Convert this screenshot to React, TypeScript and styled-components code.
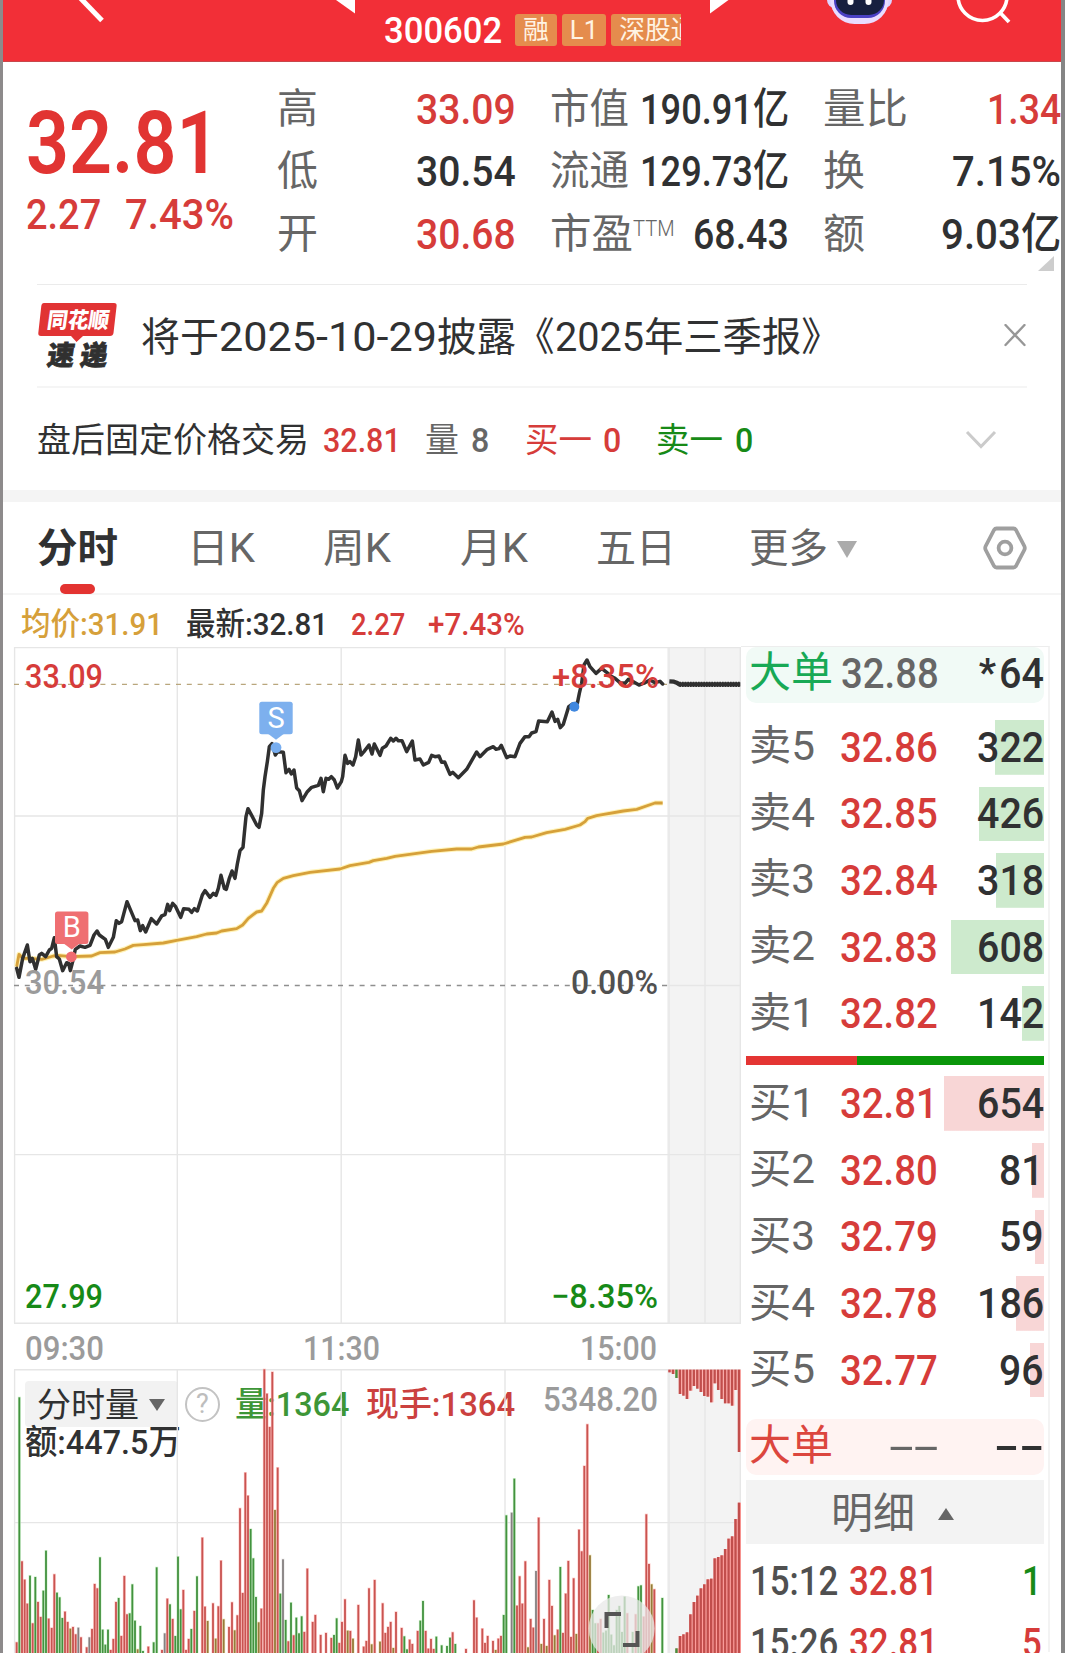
import React, { useLayoutEffect, useRef, useState } from "react";
import styled, { createGlobalStyle } from "styled-components";

const C = {
  red: "#d63c3a",
  green: "#178a17",
  ink: "#303132",
  mid: "#666666",
  soft: "#9b9b9b",
  line: "#e6e6e6",
  gold: "#d6a03a",
};
const FONT = `Roboto, "Noto Sans CJK SC", "Noto Sans", sans-serif`;

const Global = createGlobalStyle`
  * { box-sizing: border-box; }
  body { margin: 0; background: #fff; font-family: ${FONT}; color: ${C.ink}; }
`;

/* ---------- condensed text ---------- */

const FitBox = styled.span<{ $w: number; $size: number; $color?: string; $weight?: number }>`
  display: block;
  flex: none;
  width: ${(p) => p.$w}px;
  font-size: ${(p) => p.$size}px;
  line-height: ${(p) => Math.round(p.$size * 1.2)}px;
  font-weight: ${(p) => p.$weight ?? 400};
  color: ${(p) => p.$color ?? "inherit"};
`;
const FitInner = styled.span`
  display: inline-block;
  vertical-align: top;
  white-space: nowrap;
  transform-origin: 0 50%;
`;

type FitProps = { w: number; size: number; color?: string; weight?: number; children: React.ReactNode };
function Fit({ w, size, color, weight, children }: FitProps) {
  const ref = useRef<HTMLSpanElement>(null);
  const [k, setK] = useState(1);
  useLayoutEffect(() => {
    if (ref.current) setK(w / ref.current.offsetWidth);
  }, [w, size, weight, children]);
  return (
    <FitBox $w={w} $size={size} $color={color} $weight={weight}>
      <FitInner ref={ref} style={{ transform: `scaleX(${k})` }}>{children}</FitInner>
    </FitBox>
  );
}

/* ---------- frame and header ---------- */

const Page = styled.div`
  width: 1065px;
  height: 1653px;
  overflow: hidden;
  background: #fff;
  border-left: 3px solid #8d8a8b;
  border-right: 4px solid #858585;
`;
const Header = styled.header`
  height: 62px;
  background: #f22f37;
  border-bottom: 1px solid #c8474b;
  display: grid;
  grid-template-columns: 333px 48px 297px 146px 90px 1fr;
  overflow: hidden;
`;
const Identity = styled.div`
  display: flex;
  align-items: center;
  height: 52px;
  margin-top: 4px;
  overflow: hidden;
`;
const Code = styled.div`
  padding-top: 1px;
`;
const Tags = styled.div`
  display: flex;
  gap: 5px;
  margin: -1px 0 0 13px;
`;
const Tag = styled.span`
  flex: none;
  height: 32px;
  line-height: 32px;
  padding: 0 8px;
  border-radius: 3px;
  background: #e58c4d;
  color: #fff3e2;
  font-size: 25.8px;
`;

/* ---------- summary ---------- */

const Summary = styled.section`
  position: relative;
  display: grid;
  grid-template-columns: 274px 1fr;
  height: 222px;
`;
const PriceBlock = styled.div`
  padding: 29px 0 0 23px;
`;
const Changes = styled.div`
  display: flex;
  gap: 24px;
  margin-top: -7px;
`;
const Metrics = styled.div`
  display: grid;
  grid-template-columns: 239px 239px 238px;
  grid-auto-rows: 62.3px;
  column-gap: 34px;
  padding-top: 16px;
`;
const Metric = styled.div`
  display: flex;
  align-items: center;
  justify-content: space-between;
`;
const MetricName = styled.div`
  display: flex;
  align-items: flex-start;
  padding-top: 1px;
`;
const Sup = styled.div`
  padding-top: 5px;
`;
const Corner = styled.i`
  position: absolute;
  right: 7px;
  bottom: 13px;
  border-left: 16px solid transparent;
  border-bottom: 15px solid #cdcdcd;
`;

/* ---------- notices ---------- */

const Notice = styled.section`
  margin: 0 34px;
  height: 104px;
  border-top: 1px solid #ebebeb;
  border-bottom: 2px solid #f5f5f5;
  display: flex;
  align-items: center;
`;
const Brand = styled.div`
  width: 80px;
  margin-right: 24px;
  height: 67px;
`;
const Headline = styled.div`
  display: flex;
  align-items: center;
  padding-top: 4px;
`;
const Push = styled.div`
  flex: 1;
`;
const AfterHours = styled.section`
  height: 102px;
  padding: 2px 64px 0 34px;
  display: flex;
  align-items: center;
`;
const Pair = styled.div<{ $ml: number; $gap: number }>`
  display: flex;
  margin-left: ${(p) => p.$ml}px;
  gap: ${(p) => p.$gap}px;
`;
const Band = styled.div`
  height: 12px;
  background: #f4f4f4;
`;

/* ---------- tabs ---------- */

const Tabs = styled.nav`
  height: 93px;
  padding: 0 34px 0 34px;
  border-bottom: 2px solid #f5f5f5;
  display: grid;
  grid-template-columns: 150px 136px 137px 136px 153px 1fr auto;
  align-items: center;
`;
const Tab = styled.div<{ $on?: boolean }>`
  position: relative;
  display: flex;
  align-items: center;
  gap: 9px;
  height: 91px;
  padding-top: 3px;
  color: ${(p) => (p.$on ? C.ink : C.mid)};
  &::after {
    content: "";
    display: ${(p) => (p.$on ? "block" : "none")};
    position: absolute;
    left: 23px;
    bottom: -1px;
    width: 35px;
    height: 10px;
    border-radius: 5px;
    background: #e33331;
  }
`;
const Caret = styled.i<{ $w: number; $h: number; $color: string; $up?: boolean }>`
  border-left: ${(p) => p.$w / 2}px solid transparent;
  border-right: ${(p) => p.$w / 2}px solid transparent;
  ${(p) => (p.$up ? "border-bottom" : "border-top")}: ${(p) => p.$h}px solid ${(p) => p.$color};
`;
const QuoteLine = styled.div`
  height: 52px;
  padding: 5px 0 0 18px;
  display: flex;
  align-items: center;
`;

/* ---------- body ---------- */

const Body = styled.main`
  display: flex;
  height: 1006px;
`;
const Charts = styled.section`
  position: relative;
  width: 738px;
`;
const ChartSvg = styled.svg`
  position: relative;
  display: block;
`;
const VolumeBar = styled.div`
  position: absolute;
  left: 22px;
  top: 734px;
  width: 500px;
`;
const VolumeTop = styled.div`
  display: flex;
  align-items: center;
  height: 46px;
`;
const Picker = styled.div`
  display: flex;
  align-items: center;
  gap: 10px;
  width: 153px;
  height: 46px;
  padding: 2px 0 0 12px;
  border-radius: 4px;
  background: #f2f2f2;
  margin-right: 7px;
`;
const Help = styled.span`
  width: 35px;
  height: 35px;
  border: 2.5px solid #c3c3c3;
  border-radius: 50%;
  color: #bdbdbd;
  font-size: 27px;
  line-height: 31px;
  text-align: center;
  margin-right: 15px;
`;
const Amount = styled.div`
  margin-top: -5px;
`;

const Book = styled.section`
  width: 309px;
  height: 1006px;
  padding: 0 4px 0 5px;
  border-top: 1px solid #ededed;
  border-right: 2px solid #f3f3f3;
  margin-top: -1px;
`;
const BigOrder = styled.div<{ $bg: string }>`
  display: grid;
  grid-template-columns: 92px 98px 1fr;
  align-items: center;
  height: 55.5px;
  padding: 0 0 3px 3px;
  border-radius: 10px;
  background: ${(p) => p.$bg};
`;
const Star = styled.span`
  font-size: 38px;
  font-weight: 700;
  line-height: 52px;
  height: 38px;
  margin-right: 3px;
`;
const End = styled.div<{ $pr?: number }>`
  display: flex;
  justify-content: flex-end;
  padding-right: ${(p) => p.$pr ?? 0}px;
`;
const Levels = styled.div<{ $mt: number }>`
  display: grid;
  grid-auto-rows: 54.6px;
  row-gap: 12px;
  margin-top: ${(p) => p.$mt}px;
`;
const Level = styled.div<{ $bar: number; $tint: string }>`
  display: grid;
  grid-template-columns: 91px 100px 1fr;
  align-items: center;
  padding: 0 0 1px 3px;
  background: linear-gradient(${(p) => p.$tint}, ${(p) => p.$tint}) right / ${(p) => p.$bar}px 100% no-repeat;
`;
const Ratio = styled.div`
  height: 9.5px;
  margin-top: 15px;
  background: linear-gradient(90deg, #e43533 37.3%, #0a960a 37.3%);
`;
const Details = styled.div`
  display: flex;
  align-items: center;
  gap: 23px;
  height: 64px;
  margin: 6px 0 5px;
  padding: 4px 0 0 85px;
  background: #f3f3f3;
`;
const Tick = styled.div`
  display: grid;
  grid-template-columns: 99px 90px 1fr;
  align-items: center;
  height: 62px;
  padding: 3px 0 0 4px;
`;

/* ---------- data ---------- */

const metrics: { name: string; nw: number; value: string; w: number; color?: string; sup?: string }[] = [
  { name: "高", nw: 41, value: "33.09", w: 100, color: C.red },
  { name: "市值", nw: 79, value: "190.91亿", w: 149 },
  { name: "量比", nw: 85, value: "1.34", w: 74, color: C.red },
  { name: "低", nw: 41, value: "30.54", w: 100 },
  { name: "流通", nw: 79, value: "129.73亿", w: 149 },
  { name: "换", nw: 42, value: "7.15%", w: 109 },
  { name: "开", nw: 41, value: "30.68", w: 100, color: C.red },
  { name: "市盈", nw: 83, value: "68.43", w: 96, sup: "TTM" },
  { name: "额", nw: 42, value: "9.03亿", w: 120 },
];

const asks: [string, string, string, number][] = [
  ["卖5", "32.86", "322", 49],
  ["卖4", "32.85", "426", 65],
  ["卖3", "32.84", "318", 48],
  ["卖2", "32.83", "608", 93],
  ["卖1", "32.82", "142", 22],
];
const bids: [string, string, string, number][] = [
  ["买1", "32.81", "654", 100],
  ["买2", "32.80", "81", 12],
  ["买3", "32.79", "59", 9],
  ["买4", "32.78", "186", 28],
  ["买5", "32.77", "96", 14],
];

const PRICE =
  "50,985 57,1012 68,955 82,915 90,965 97,955 107,988 118,945 125,940 137,950 148,930 155,925 163,893 170,950 178,957 188,992 200,968 206,970 211,992 218,965 226,928 240,918 255,922 270,916 282,885 291,873 298,885 316,898 325,922 340,892 349,842 357,850 365,845 381,785 405,842 413,840 421,872 428,857 437,876 454,836 470,852 485,828 495,824 503,793 509,812 518,790 527,800 542,832 551,806 567,808 575,817 583,806 592,813 607,765 615,752 630,772 640,760 648,766 655,745 663,706 673,745 679,748 688,715 696,693 705,715 712,672 720,632 729,622 733,580 738,530 744,506 757,530 770,555 777,562 785,520 790,450 795,410 802,365 808,320 816,311 826,345 833,335 850,337 858,398 867,388 874,402 882,390 890,444 898,452 906,482 922,455 935,442 955,436 963,415 970,455 978,415 986,418 994,410 1003,420 1012,444 1024,425 1028,410 1035,346 1043,370 1050,365 1059,375 1067,350 1075,300 1083,345 1092,335 1107,315 1116,342 1123,312 1140,346 1147,325 1158,318 1172,295 1180,303 1188,295 1195,302 1206,302 1220,335 1237,303 1245,360 1260,357 1270,375 1286,367 1295,346 1305,350 1317,348 1325,367 1334,366 1350,403 1358,397 1375,413 1400,388 1430,336 1440,350 1462,328 1480,320 1488,328 1497,326 1504,316 1520,353 1530,348 1545,350 1560,310 1575,290 1587,290 1595,279 1608,275 1616,243 1642,245 1656,216 1665,244 1673,238 1681,263 1690,253 1706,200 1718,192 1732,190 1738,160 1745,130 1752,75 1761,60 1770,80 1788,100 1805,85 1820,97 1832,108 1845,115 1860,128 1875,130 1885,118 1900,125 1917,135 1935,128 1950,120 1965,128 1980,124 1988,132";
const AVERAGE =
  "50,980 57,943 68,955 90,955 125,958 160,948 180,947 213,950 275,948 300,938 345,936 375,927 400,916 430,914 490,909 530,901 590,890 620,882 650,879 665,873 710,866 728,855 745,835 770,816 785,813 800,790 820,745 832,727 850,715 880,707 930,697 1020,687 1050,677 1107,667 1120,662 1160,655 1185,649 1245,641 1295,634 1370,627 1415,627 1435,621 1510,612 1575,592 1595,591 1640,578 1695,568 1740,555 1755,545 1763,535 1790,527 1870,513 1910,508 1965,489 1988,489";

/* x, kind, top; r = up, g = down, o = mixed, k = flat */
const VOLUME =
  "50r1087 58g352 66r844 74r899 82r971 90g887 98r1030 106g891 114r966 122r1011 130g932 138g812 146r1016 155r1044 163r883 171g938 179g952 187g1014 195r995 203r1026 211o1046 219r1041 227r1063 235k1043 243r1072 260r1102 268k1072 276r1047 284r912 292r925 300g832 308g1049 316g1094 324g1049 332r1110 340r1077 348r966 356g954 364r1068 373r888 381r1003 389g1000 397g913 405g1022 413o1108 421g1038 429g1113 445r1100 461g1087 470g862 486r1110 494k1060 502r956 510g973 518r1017 526g1068 534g830 542g988 550r930 558r1110 566r1077 574g1047 583r993 591g889 607r773 615r980 623o1023 639r970 647o1076 655r979 663r842 671o1018 687r1041 696r967 704o1051 712r1006 720r685 728r939 736r578 744r647 752g747 760g835 768g951 776o1027 784r986 793r268 801r341 809r441 817r276 825o690 833r563 841g941 849k838 857g1020 865r1084 873g968 881r1066 889g1013 897g1060 905g1009 913r1056 922r866 938r1026 946r1005 962r1065 978r1059 994r1074 1002g1065 1010g1015 1018r1089 1026r1026 1035r958 1043o1052 1051r1053 1059o1076 1075r975 1091r1100 1099r1083 1107r925 1115o1093 1124r900 1140o1085 1148r970 1156r1059 1164r1041 1172r1026 1180o1104 1188r996 1205r1044 1213g1069 1221g1108 1229r1079 1237r1092 1253r1053 1261g1022 1269g963 1277r1053 1285r1106 1293r1077 1301r1107 1309g1070 1325g1096 1341g1098 1350g1073 1358r1057 1366g1092 1398r1107 1422r961 1430r1013 1447r1046 1455r1089 1463r1068 1479r1083 1487o1110 1495r1076 1503r1068 1511g1005 1519g706 1535k698 1543g596 1551r977 1559r889 1567r971 1576r844 1584o1102 1592r1017 1600r1043 1608k873 1616r713 1624o1092 1632r1017 1640o1098 1648r900 1656r978 1664o1066 1673r1049 1681g861 1689r1059 1697r941 1705r843 1713r1071 1721r895 1729o1062 1737r749 1745r814 1753r558 1762r433 1770o826 1778g990 1786g1030 1794r1030 1802r1017 1810g1058 1818g1052 1826g945 1834g1064 1842g1096 1850g990 1858g978 1866g1056 1874g950 1882r1000 1898g1056 1907r1003 1915g919 1923g916 1931r1010 1939r703 1947r852 1955o913 1963r928 1987g954";
const AUCTION_TOP = [277, 282, 294, 342, 347, 357, 332, 318, 326, 336, 348, 350, 367, 310, 330, 357, 370, 370, 377, 330, 516];
const AUCTION_LOW = [1119, 1119, 1105, 1068, 1063, 1057, 1003, 966, 947, 925, 913, 898, 896, 835, 831, 826, 807, 776, 769, 717, 668];

const bars = VOLUME.split(" ").map((s) => {
  const m = /^(\d+)([rgok])(\d+)$/.exec(s)!;
  return { x: +m[1], kind: m[2], top: +m[3] };
});
const BAR: Record<string, string> = { r: "#c95451", g: "#43923f", o: "#967a3a", k: "#858080" };
const HALO: Record<string, string> = { r: "#ffb5b3", g: "#c5efc2", o: "#e8dca8", k: "#e2dfdf" };

/* ---------- charts ---------- */

type LabelProps = { x: number; y: number; w: number; fill: string; weight?: number; children: string };
const Label = ({ x, y, w, fill, weight = 500, children }: LabelProps) => (
  <text x={x} y={y} fill={fill} fontSize={34} fontWeight={weight} fontFamily={FONT} textLength={w} lengthAdjust="spacingAndGlyphs">
    {children}
  </text>
);

const Pin = ({ x, y, fill, letter }: { x: number; y: number; fill: string; letter: string }) => (
  <g>
    <rect x={x - 16.7} y={y} width={33.4} height={32.6} rx={2.5} fill={fill} />
    <path d={`M${x - 8} ${y + 32}L${x} ${y + 38}L${x + 8} ${y + 32}Z`} fill={fill} />
    <text x={x} y={y + 26} fill="#fff" fontSize={29} fontFamily={FONT} textAnchor="middle">{letter}</text>
  </g>
);

function Chart() {
  return (
    <ChartSvg width={738} height={1006} viewBox="3 647 738 1006">
      <rect x={667} y={647} width={74} height={676} fill="#f3f3f3" />
      <rect x={667} y={1370} width={74} height={283} fill="#f3f3f3" />
      <g stroke={C.line} strokeWidth={1.4} fill="none">
        {[14.6, 177.3, 341.2, 505, 669, 705, 740.3].map((x) => (
          <path key={x} d={`M${x} 647V1323M${x} 1370V1653`} />
        ))}
        {[647.6, 816, 1154.6, 1323.3, 1369.8, 1522.6].map((y) => (
          <path key={y} d={`M14 ${y}H741`} />
        ))}
        <path d="M667 985.5H741" />
      </g>
      <path d="M14 684.4H667" stroke="#b9a67c" strokeWidth={1.4} strokeDasharray="5 5.8" />
      <path d="M14 985.5H667" stroke="#8f8f8f" strokeWidth={1.4} strokeDasharray="5 5.8" />

      <g transform="translate(0 640) scale(0.33333)" fill="none" strokeLinejoin="round">
        <polyline points={AVERAGE} stroke="#fff3b8" strokeWidth={15} />
        <polyline points={AVERAGE} stroke={C.gold} strokeWidth={8.5} />
        <polyline points={PRICE} stroke="#303030" strokeWidth={10.5} strokeLinecap="round" />
        <polyline points="2008,124 2022,125 2030,128 2038,133 2221,133" stroke="#303030" strokeWidth={13} />
        <path d="M2038 133H2221" stroke="#303030" strokeWidth={16} strokeDasharray="5 3" />
      </g>
      <circle cx={574.3} cy={706.7} r={5} fill="#3f87df" />
      <circle cx={71.4} cy={956.8} r={5.4} fill="#ef6b70" />
      <circle cx={276} cy={747.6} r={5.4} fill="#78aef0" />
      <Pin x={276} y={701.7} fill="#7db0ee" letter="S" />
      <Pin x={71.7} y={911.4} fill="#ef6f72" letter="B" />

      <Label x={25} y={687.8} w={78} fill={C.red}>33.09</Label>
      <Label x={552} y={687.8} w={107} fill={C.red}>+8.35%</Label>
      <Label x={25} y={993.8} w={79} fill={C.soft}>30.54</Label>
      <Label x={571} y={993.8} w={87} fill="#505050">0.00%</Label>
      <Label x={25} y={1307.8} w={78} fill={C.green}>27.99</Label>
      <Label x={551} y={1307.8} w={107} fill={C.green}>−8.35%</Label>
      <Label x={25} y={1360} w={79} fill={C.soft}>09:30</Label>
      <Label x={303} y={1360} w={77} fill={C.soft}>11:30</Label>
      <Label x={580} y={1360} w={77} fill={C.soft}>15:00</Label>
      <Label x={543} y={1410.5} w={115} fill={C.soft}>5348.20</Label>

      <g transform="translate(0 1280) scale(0.33333)">
        {bars.map((b) => (
          <rect key={`h${b.x}`} x={b.x - 4.5} y={b.top - 2} width={9} height={1125 - b.top} fill={HALO[b.kind]} opacity={0.75} />
        ))}
        {bars.map((b) => (
          <rect key={b.x} x={b.x - 2.7} y={b.top} width={5.4} height={1120 - b.top} fill={BAR[b.kind]} />
        ))}
        {AUCTION_TOP.map((end, i) => {
          const x = 2005 + i * 10.42;
          const fill = i === 2 ? BAR.g : "#c14e4c";
          return (
            <g key={i}>
              <rect x={x} y={269} width={10.4} height={end - 269} fill="#ffb0ae" />
              <rect x={x} y={269} width={7} height={end - 269} fill={fill} />
              <rect x={x} y={AUCTION_LOW[i]} width={10.4} height={1120 - AUCTION_LOW[i]} fill="#ff9c9a" />
              <rect x={x} y={AUCTION_LOW[i]} width={7} height={1120 - AUCTION_LOW[i]} fill={fill} />
            </g>
          );
        })}
      </g>

      <circle cx={621.7} cy={1628.5} r={33} fill="#e8e8e8" opacity={0.74} />
      <path d="M606.5 1628V1614H621M623 1645H637.5V1631" fill="none" stroke="#555" strokeWidth={4} />
    </ChartSvg>
  );
}

/* ---------- page ---------- */

const Close = () => (
  <svg width="24" height="24" viewBox="0 0 24 24" stroke="#979797" strokeWidth="2.4" strokeLinecap="round">
    <path d="M2.5 1L21.5 21M21.5 1L2.5 21" />
  </svg>
);
const Chevron = () => (
  <svg width="32" height="20" viewBox="0 0 32 20" fill="none" stroke="#cbcbcb" strokeWidth="3">
    <path d="M2 2L16 16.5L30 2" />
  </svg>
);
const Settings = () => (
  <svg width="44" height="44" viewBox="0 0 44 44" fill="none" stroke="#9f9f9f" strokeWidth="3.8" strokeLinejoin="round">
    <path d="M13.5 2.5H30.5Q32 2.5 33 4L41.3 20Q42.3 22 41.3 24L33 40Q32 41.5 30.5 41.5H13.5Q12 41.5 11 40L2.7 24Q1.7 22 2.7 20L11 4Q12 2.5 13.5 2.5Z" />
    <circle cx="22" cy="22" r="6.4" />
  </svg>
);

const LevelRow = ({ row, tint }: { row: [string, string, string, number]; tint: string }) => (
  <Level $bar={row[3]} $tint={tint}>
    <Fit w={66} size={41} color={C.mid}>{row[0]}</Fit>
    <Fit w={98} size={43} weight={500} color={C.red}>{row[1]}</Fit>
    <End><Fit w={row[2].length * 22.3} size={43} weight={500}>{row[2]}</Fit></End>
  </Level>
);

export default function App() {
  return (
    <Page>
      <Global />
      <Header>
        <svg width="333" height="62" viewBox="3 0 333 62">
          <path d="M74.5 -8L102 20.5" stroke="#fff" strokeWidth="5" />
        </svg>
        <svg width="48" height="62" viewBox="336 0 48 62">
          <path d="M336 0H355V13.5Z" fill="#fff" />
        </svg>
        <Identity>
          <Code><Fit w={118} size={37} weight={500} color="#fff">300602</Fit></Code>
          <Tags>
            <Tag>融</Tag>
            <Tag>L1</Tag>
            <Tag>深股通</Tag>
          </Tags>
        </Identity>
        <svg width="146" height="62" viewBox="681 0 146 62">
          <path d="M710 0V13.5L728.5 0Z" fill="#fff" />
        </svg>
        <svg width="90" height="62" viewBox="827 0 90 62">
          <rect x="827" y="-20" width="65" height="28" rx="8" fill="#ded3ff" />
          <rect x="830.5" y="-30" width="58" height="54" rx="24" fill="#e9dcff" />
          <rect x="834" y="-26" width="51" height="44" rx="17" fill="#4a41c4" />
          <rect x="836" y="-26" width="48" height="41" rx="15" fill="#17203f" />
          <rect x="847.5" y="-6" width="6" height="11" rx="3" fill="#fff" />
          <rect x="865.5" y="-6" width="6" height="11" rx="3" fill="#fff" />
        </svg>
        <svg width="144" height="62" viewBox="917 0 144 62">
          <circle cx="982.5" cy="-4" r="24.5" fill="none" stroke="#fff" strokeWidth="3.6" />
          <path d="M999.5 12L1009 22" stroke="#fff" strokeWidth="3.8" />
        </svg>
      </Header>

      <Summary>
        <PriceBlock>
          <Fit w={194} size={87} weight={600} color="#e13432">32.81</Fit>
          <Changes>
            <Fit w={75} size={43} weight={500} color={C.red}>2.27</Fit>
            <Fit w={109} size={43} weight={500} color={C.red}>7.43%</Fit>
          </Changes>
        </PriceBlock>
        <Metrics>
          {metrics.map((m) => (
            <Metric key={m.name}>
              <MetricName>
                <Fit w={m.nw} size={41} color={C.mid}>{m.name}</Fit>
                {m.sup && <Sup><Fit w={42} size={22.5} color={C.mid} weight={300}>{m.sup}</Fit></Sup>}
              </MetricName>
              <Fit w={m.w} size={43} weight={500} color={m.color}>{m.value}</Fit>
            </Metric>
          ))}
        </Metrics>
        <Corner />
      </Summary>

      <Notice>
        <Brand>
          <svg width="80" height="67" viewBox="0 0 80 67" overflow="visible">
            <path d="M7 1H77Q80 1 79.6 4L76.5 31Q76 34 73 34H46L39.5 40L34 34H4Q1 34 1.3 31L4.3 4Q4.7 1 7 1Z" fill="#e13334" />
            <g fontFamily={FONT} fontWeight={900} transform="skewX(-8)">
              <text x="13" y="26.5" fontSize="22" fill="#fff" textLength="62" lengthAdjust="spacingAndGlyphs">同花顺</text>
              <text x="18" y="63" fontSize="27" fill="#303030" stroke="#303030" strokeWidth="0.8" textLength="60">速递</text>
            </g>
          </svg>
        </Brand>
        <Headline>
          <Fit w={78} size={39.5}>将于</Fit>
          <Fit w={218} size={41}>2025-10-29</Fit>
          <Fit w={79} size={39.5}>披露</Fit>
          <Fit w={39} size={39.5}>《</Fit>
          <Fit w={89} size={41}>2025</Fit>
          <Fit w={197} size={39.5}>年三季报》</Fit>
        </Headline>
        <Push />
        <Close />
      </Notice>

      <AfterHours>
        <Fit w={272} size={34.5}>盘后固定价格交易</Fit>
        <Pair $ml={14} $gap={24}>
          <Fit w={78} size={34} weight={500} color={C.red}>32.81</Fit>
          <Fit w={34} size={34} color={C.mid}>量</Fit>
        </Pair>
        <Pair $ml={12} $gap={36}>
          <Fit w={18} size={34} weight={500} color={C.mid}>8</Fit>
          <Fit w={67} size={34} color={C.red}>买一</Fit>
        </Pair>
        <Pair $ml={11} $gap={35}>
          <Fit w={18} size={34} weight={500} color={C.red}>0</Fit>
          <Fit w={67} size={34} color={C.green}>卖一</Fit>
        </Pair>
        <Pair $ml={12} $gap={0}>
          <Fit w={18} size={34} weight={500} color={C.green}>0</Fit>
        </Pair>
        <Push />
        <Chevron />
      </AfterHours>
      <Band />

      <Tabs>
        <Tab $on><Fit w={81} size={40} weight={700}>分时</Fit></Tab>
        <Tab><Fit w={68} size={40}>日K</Fit></Tab>
        <Tab><Fit w={68} size={40}>周K</Fit></Tab>
        <Tab><Fit w={68} size={40}>月K</Fit></Tab>
        <Tab><Fit w={80} size={40}>五日</Fit></Tab>
        <Tab><Fit w={79} size={40}>更多</Fit><Caret $w={20} $h={17} $color="#ababab" /></Tab>
        <Settings />
      </Tabs>

      <QuoteLine>
        <Fit w={142} size={32} weight={500} color={C.gold}>均价:31.91</Fit>
        <Pair $ml={23} $gap={23}>
          <Fit w={142} size={32} weight={500}>最新:32.81</Fit>
          <Fit w={54} size={32} weight={500} color={C.red}>2.27</Fit>
          <Fit w={97} size={32} weight={500} color={C.red}>+7.43%</Fit>
        </Pair>
      </QuoteLine>

      <Body>
        <Charts>
          <VolumeBar>
            <VolumeTop>
              <Picker>
                <Fit w={102} size={34}>分时量</Fit>
                <Caret $w={16} $h={12} $color={C.mid} />
              </Picker>
              <Help>?</Help>
              <Fit w={114} size={34} weight={500} color="#3d9637">量:1364</Fit>
              <Pair $ml={17} $gap={0}>
                <Fit w={149} size={34} weight={500} color="#cb413f">现手:1364</Fit>
              </Pair>
            </VolumeTop>
            <Amount><Fit w={156} size={34} weight={500}>额:447.5万</Fit></Amount>
          </VolumeBar>
          <Chart />
        </Charts>

        <Book>
          <BigOrder $bg="#f1faf6">
            <Fit w={84} size={42} color="#18a955">大单</Fit>
            <Fit w={98} size={43} weight={500} color={C.mid}>32.88</Fit>
            <End><Star>*</Star><Fit w={45} size={43} weight={500}>64</Fit></End>
          </BigOrder>
          <Levels $mt={17.5}>
            {asks.map((r) => <LevelRow key={r[0]} row={r} tint="#cdeacd" />)}
          </Levels>
          <Ratio />
          <Levels $mt={11}>
            {bids.map((r) => <LevelRow key={r[0]} row={r} tint="#f8d6d6" />)}
          </Levels>
          <Levels $mt={22}>
            <BigOrder $bg="#fff3f2">
              <Fit w={84} size={42} color="#dc463e">大单</Fit>
              <End><Fit w={50} size={43} color={C.mid}>--</Fit></End>
              <End><Fit w={50} size={43} weight={500}>--</Fit></End>
            </BigOrder>
          </Levels>
          <Details>
            <Fit w={84} size={42} color={C.mid}>明细</Fit>
            <Caret $up $w={17} $h={12} $color={C.mid} />
          </Details>
          <Tick>
            <Fit w={88} size={40} weight={500} color="#505050">15:12</Fit>
            <Fit w={89} size={40} weight={500} color={C.red}>32.81</Fit>
            <End $pr={2}><Fit w={20} size={40} weight={500} color={C.green}>1</Fit></End>
          </Tick>
          <Tick>
            <Fit w={88} size={40} weight={500} color="#505050">15:26</Fit>
            <Fit w={89} size={40} weight={500} color={C.red}>32.81</Fit>
            <End $pr={2}><Fit w={20} size={40} weight={500} color={C.red}>5</Fit></End>
          </Tick>
        </Book>
      </Body>
    </Page>
  );
}
